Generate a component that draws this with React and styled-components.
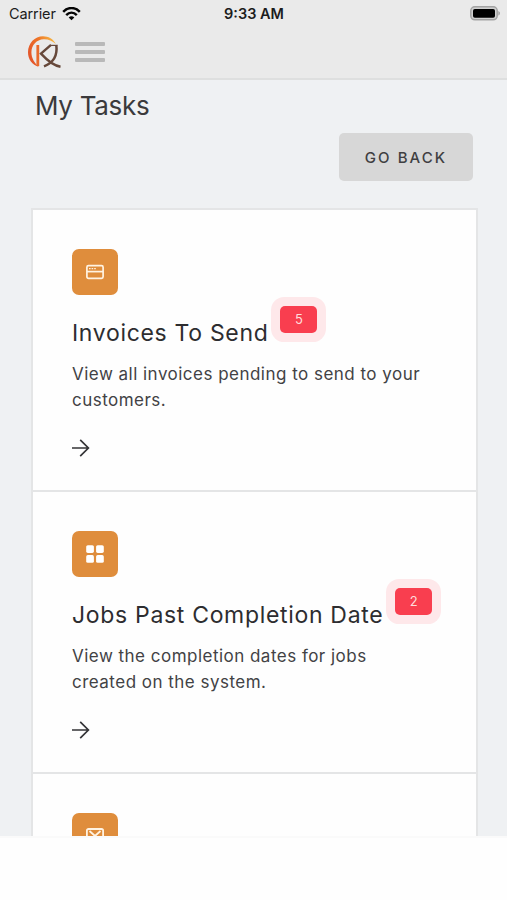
import React from 'react';
import styled, { createGlobalStyle } from 'styled-components';

const GlobalStyle = createGlobalStyle`
  * {
    box-sizing: border-box;
  }
  body {
    margin: 0;
    background-color: #fefefe;
    color: #3a3a3c;
    font-family: Inter, 'Liberation Sans', sans-serif;
  }
`;

const Screen = styled('div')`
  width: 507px;
  height: 900px;
  overflow: hidden;
`;

const Header = styled('header')`
  height: 80px;
  background-color: #eaeaea;
  border-bottom: 2px solid #dedfdf;
`;

const StatusBar = styled('div')`
  display: grid;
  grid-template-columns: 1fr auto 1fr;
  align-items: center;
  height: 27px;
  padding: 0 7px 0 9px;
  color: #1c1c1c;
  font-size: 14.5px;
`;

const Carrier = styled('div')`
  display: flex;
  align-items: center;
  gap: 6px;
  letter-spacing: -0.1px;
`;

const Time = styled('span')`
  font-weight: 600;
  font-size: 14.5px;
  margin-right: 1px;
`;

const BatterySlot = styled('div')`
  display: flex;
  justify-content: flex-end;
`;

const NavBar = styled('nav')`
  display: flex;
  align-items: center;
  height: 50px;
  padding-left: 26px;
  gap: 13px;
`;

const MenuButton = styled('button')`
  display: flex;
  flex-direction: column;
  gap: 4px;
  width: 30px;
  padding: 0;
  border: unset;
  background: none;
  cursor: pointer;
`;

const MenuLine = styled('span')`
  height: 4px;
  border-radius: 1px;
  background-color: #b9b9b9;
`;

const Content = styled('main')`
  height: 756px;
  overflow: hidden;
  padding: 8px 29px 0 31px;
  background-color: #eff1f3;
`;

const BottomBar = styled('footer')`
  height: 64px;
  border-top: 2px solid #fafafa;
  background-color: #fefefe;
`;

const PageTitle = styled('h1')`
  margin: 0 0 0 4px;
  font-size: 26px;
  font-weight: 400;
  line-height: 36px;
  letter-spacing: -0.3px;
`;

const Actions = styled('div')`
  display: flex;
  justify-content: flex-end;
  margin: 9px 5px 27px 0;
`;

const BackButton = styled('button')`
  width: 134px;
  height: 48px;
  padding: 0;
  border: unset;
  border-radius: 5px;
  background-color: #d7d7d7;
  color: #3f3f42;
  font-family: inherit;
  font-size: 15px;
  font-weight: 500;
  letter-spacing: 2.05px;
  cursor: pointer;
`;

const TaskList = styled('div')`
  width: 447px;
  border: 2px solid #e4e5e6;
  background-color: #fefefe;
`;

const Task = styled('section')`
  height: 282px;
  padding: 39px 39px 0;
  border-bottom: 2px solid #e4e5e6;
`;

const IconBox = styled('div')`
  display: flex;
  align-items: center;
  justify-content: center;
  width: 46px;
  height: 46px;
  border-radius: 7px;
  background-color: #df8d3c;
`;

const TaskHeading = styled('div')`
  display: flex;
  align-items: flex-start;
  margin-top: 24px;
`;

const TaskTitle = styled('h2')`
  margin: 0;
  font-size: 23px;
  font-weight: 400;
  line-height: 28px;
  letter-spacing: 0.68px;
  color: #2d2d30;
  white-space: nowrap;
`;

const Badge = styled('span')`
  flex: none;
  width: 37px;
  height: 27px;
  margin: -13px 0 0 12px;
  border-radius: 5px;
  background-color: #f93e4f;
  box-shadow: 0 0 0 9px #fee8ea;
  color: #ffdcdc;
  font-size: 13px;
  line-height: 27px;
  text-align: center;
`;

const Description = styled('p')`
  width: 350px;
  margin: 15px 0 26px;
  font-size: 17px;
  line-height: 25.7px;
  letter-spacing: 0.48px;
  color: #424245;
`;

const Logo = () => (
    <svg width="36" height="36" viewBox="0 0 36 36" fill="none">
        <defs>
            <linearGradient id="ring" x1="3" y1="20" x2="30" y2="8" gradientUnits="userSpaceOnUse">
                <stop offset="0" stopColor="#e4572a" />
                <stop offset="0.5" stopColor="#ee7428" />
                <stop offset="1" stopColor="#f6bb45" />
            </linearGradient>
        </defs>
        <path d="M13 33C6 31 2 25 2 18.2C2 9.3 8.8 2.3 17 2.3C22.4 2.3 27.4 5 29.8 10C26.2 6.8 22.3 5 17.6 5.2C10.7 5.5 5.4 11 5.4 18.3C5.4 24 8.3 29 13 33Z" fill="url(#ring)" />
        <path d="M11.8 11V32" stroke="#e96a2c" strokeWidth="2.8" />
        <path d="M25 10.8L15 19.6C19 24 25 31 34.5 32.8" stroke="#66483a" strokeWidth="2.4" />
        <path d="M24.6 11.4H31.3" stroke="#66483a" strokeWidth="1.2" />
        <path d="M30.3 11C31.6 21 28 28.5 18 32.4" stroke="#66483a" strokeWidth="2.5" />
    </svg>
);

const Wifi = () => (
    <svg width="19" height="14" viewBox="0 0 19 14" fill="none" stroke="#050505" strokeWidth="2.5">
        <path d="M1.2 4.8C6 -0.2 13 -0.2 17.8 4.8" />
        <path d="M4.2 8.1C7.3 5.1 11.7 5.1 14.8 8.1" />
        <path d="M6.7 10.4C8.3 8.9 10.7 8.9 12.3 10.4L9.5 13.2Z" fill="#050505" stroke="none" />
    </svg>
);

const Battery = () => (
    <svg width="30" height="16" viewBox="0 0 30 16">
        <rect x="0.8" y="0.8" width="26.4" height="13" rx="4" fill="#d0d0d0" stroke="#a3a3a3" strokeWidth="1.5" />
        <rect x="3" y="2.9" width="22" height="8.9" rx="1.8" fill="#000" />
        <path d="M28.3 5C30.5 5.8 30.5 8.8 28.3 9.6Z" fill="#a3a3a3" />
    </svg>
);

const WindowIcon = () => (
    <svg width="18" height="16" viewBox="0 0 18 16" fill="none" stroke="#fff3e2" strokeWidth="1.7">
        <rect x="0.9" y="1.6" width="16.2" height="12.8" rx="1.6" />
        <path d="M1 7.6H17" />
        <path d="M3 4.7H10" strokeWidth="1.2" strokeDasharray="1.6 1" />
    </svg>
);

const GridIcon = () => (
    <svg width="18" height="18" viewBox="0 0 18 18" fill="#fff">
        <rect x="0.2" y="0.2" width="7.7" height="7.7" rx="1.6" />
        <rect x="10.1" y="0.2" width="7.7" height="7.7" rx="1.6" />
        <rect x="0.2" y="10.1" width="7.7" height="7.7" rx="1.6" />
        <rect x="10.1" y="10.1" width="7.7" height="7.7" rx="1.6" />
    </svg>
);

const MailIcon = () => (
    <svg width="18" height="16" viewBox="0 0 18 16" fill="none" stroke="#fff3e2" strokeWidth="1.8">
        <rect x="0.9" y="1" width="16.2" height="14" rx="1.6" />
        <path d="M3.5 3L9 8L14.5 3M3.5 13L6.6 9.4M14.5 13L11.4 9.4" />
    </svg>
);

const Arrow = () => (
    <svg width="18" height="18" viewBox="0 0 18 18" fill="none" stroke="#343437" strokeWidth="1.7">
        <path d="M0 9H17M8.2 0.8L16.4 9L8.2 17.2" />
    </svg>
);

const tasks = [
    {
        title: 'Invoices To Send',
        count: 5,
        text: 'View all invoices pending to send to your customers.',
        icon: <WindowIcon />,
    },
    {
        title: 'Jobs Past Completion Date',
        count: 2,
        text: 'View the completion dates for jobs created on the system.',
        icon: <GridIcon />,
    },
];

const App = () => {
    return (
        <Screen>
            <GlobalStyle />
            <Header>
                <StatusBar>
                    <Carrier>Carrier <Wifi /></Carrier>
                    <Time>9:33 AM</Time>
                    <BatterySlot><Battery /></BatterySlot>
                </StatusBar>
                <NavBar>
                    <Logo />
                    <MenuButton aria-label="Menu">
                        <MenuLine />
                        <MenuLine />
                        <MenuLine />
                    </MenuButton>
                </NavBar>
            </Header>
            <Content>
                <PageTitle>My Tasks</PageTitle>
                <Actions>
                    <BackButton>GO BACK</BackButton>
                </Actions>
                <TaskList>
                    {tasks.map(task => (
                        <Task key={task.title}>
                            <IconBox>{task.icon}</IconBox>
                            <TaskHeading>
                                <TaskTitle>{task.title}</TaskTitle>
                                <Badge>{task.count}</Badge>
                            </TaskHeading>
                            <Description>{task.text}</Description>
                            <Arrow />
                        </Task>
                    ))}
                    <Task>
                        <IconBox><MailIcon /></IconBox>
                    </Task>
                </TaskList>
            </Content>
            <BottomBar />
        </Screen>
    );
};

export default App;
